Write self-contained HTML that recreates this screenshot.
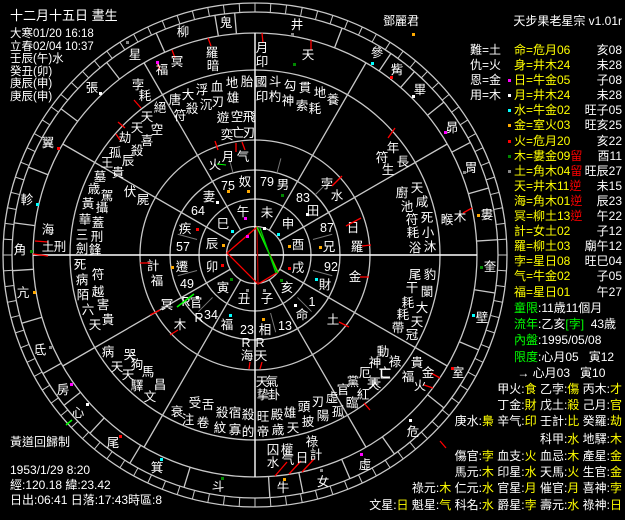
<!DOCTYPE html>
<html><head><meta charset="utf-8"><style>
html,body{margin:0;padding:0;background:#000;}
body{width:625px;height:520px;position:relative;overflow:hidden;font-family:"Liberation Sans","Noto Sans CJK TC","WenQuanYi Zen Hei",sans-serif;font-size:12px;color:#fff;}
.a{position:absolute;white-space:pre;line-height:13px;}
.y{color:#ff0;}.g{color:#0f0;}.r{color:#f00;}
.row{position:absolute;right:3px;white-space:pre;line-height:13px;text-align:right;}
.mk{position:absolute;width:3px;height:3px;}
svg{position:absolute;left:0;top:0;}
svg text{font-family:"Liberation Sans","Noto Sans CJK TC","WenQuanYi Zen Hei",sans-serif;font-size:12.5px;text-anchor:middle;dominant-baseline:central;fill:#fff;}
.tl div{height:12.5px;line-height:12.5px;font-size:11.5px;overflow:visible;}
</style></head><body>
<svg width="625" height="520" viewBox="0 0 625 520">
<g fill="none" stroke="#c8c8c8" stroke-width="1.3">
<circle cx="255" cy="255" r="28.5"/><circle cx="255" cy="255" r="56"/><circle cx="255" cy="255" r="85"/><circle cx="255" cy="255" r="115"/><circle cx="255" cy="255" r="185"/><circle cx="255" cy="255" r="222"/><circle cx="255" cy="255" r="243"/><circle cx="255" cy="255" r="252"/>
</g>
<g id="pal" stroke="#c8c8c8" stroke-width="1.3"></g>
<g id="man" stroke="#c8c8c8" stroke-width="1.3"></g>
<g id="tk" stroke="#c8c8c8" stroke-width="1"></g>
<line x1="255" y1="33" x2="255" y2="477" stroke="#fff" stroke-width="1.4"/>
<line x1="33" y1="255" x2="477" y2="255" stroke="#fff" stroke-width="1.4"/>
<g stroke-width="1.3" fill="none">
<polygon points="257,227 227,253 258,284 278,272" stroke="#f00"/>
<line x1="257" y1="227" x2="258" y2="284" stroke="#a00"/>
<line x1="257" y1="227" x2="278" y2="273" stroke="#0f0"/>
<line x1="260" y1="228" x2="276" y2="273" stroke="#0c0"/>
</g>
<text x="298" y="245">酉</text><text x="288" y="224">申</text><text x="267" y="213">未</text><text x="243" y="212">午</text><text x="223" y="224">巳</text><text x="212" y="244">辰</text><text x="212" y="267">卯</text><text x="223" y="288">寅</text><text x="244" y="299">丑</text><text x="267" y="299">子</text><text x="287" y="288">亥</text><text x="298" y="268">戌</text>
<text x="283" y="185">男</text><text x="245" y="182">奴</text><text x="209" y="197">妻</text><text x="185" y="229">疾</text><text x="182" y="267">遷</text><text x="196" y="303">官</text><text x="227" y="325">福</text><text x="265" y="330">相</text><text x="302" y="315">命</text><text x="325" y="285">財</text><text x="329" y="247">兄</text><text x="313" y="211">田</text>
<g style="fill:#888">
<text x="267" y="182">79</text><text x="303" y="198">83</text><text x="327" y="228">87</text><text x="331" y="267">92</text><text x="312" y="302">1</text><text x="285" y="326">13</text><text x="247" y="330">23</text><text x="211" y="315">34</text><text x="187" y="284">49</text><text x="183" y="247">57</text><text x="198" y="211">64</text><text x="228" y="186">75</text>
</g>
<g style="fill:#0f0">
<text x="215" y="165">火</text><text x="228" y="157">月</text><text x="243" y="157">气</text><text x="327" y="184">孛</text><text x="337" y="196">水</text><text x="353" y="228">日</text><text x="357" y="247">羅</text><text x="355" y="277">金</text><text x="333" y="320">土</text><text x="153" y="266">計</text><text x="157" y="281">福</text><text x="167" y="305">冥</text><text x="180" y="325">木</text><text x="247" y="356">海</text><text x="261" y="356">天</text>
</g>
<g style="fill:#f00;font-size:11px"><text x="186" y="302">R</text><text x="199" y="318">R</text><text x="246" y="343">R</text><text x="260" y="343">R</text></g>
<g stroke="#f00" stroke-width="1.3">
<line x1="346" y1="226" x2="361" y2="218"/><line x1="362" y1="246" x2="371" y2="245"/><line x1="360" y1="277" x2="369" y2="277"/><line x1="339" y1="322" x2="349" y2="327"/><line x1="332" y1="186" x2="342" y2="176"/><line x1="140" y1="263" x2="150" y2="263"/><line x1="160" y1="310" x2="150" y2="315"/><line x1="178" y1="330" x2="170" y2="335"/><line x1="250" y1="362" x2="249" y2="369"/><line x1="262" y1="362" x2="260" y2="369"/><line x1="218" y1="150" x2="215" y2="141"/><line x1="236" y1="152" x2="236" y2="143"/><line x1="245" y1="150" x2="242" y2="142"/>
<line x1="118" y1="122" x2="125" y2="128"/><line x1="134" y1="100" x2="141" y2="108"/><line x1="157" y1="63" x2="160" y2="70"/><line x1="172" y1="50" x2="175" y2="58"/><line x1="208" y1="38" x2="211" y2="46"/><line x1="262" y1="33" x2="263" y2="43"/><line x1="311" y1="40" x2="311" y2="50"/><line x1="388" y1="138" x2="395" y2="128"/><line x1="35" y1="241" x2="48" y2="242"/><line x1="33" y1="254" x2="48" y2="256"/><line x1="364" y1="403" x2="370" y2="410"/><line x1="440" y1="378" x2="431" y2="373"/><line x1="433" y1="388" x2="424" y2="385"/><line x1="463" y1="213" x2="472" y2="208"/><line x1="275" y1="476" x2="287" y2="462"/><line x1="289" y1="474" x2="301" y2="461"/><line x1="302" y1="472" x2="314" y2="459"/><line x1="116" y1="134" x2="120" y2="140"/><line x1="440" y1="441" x2="446" y2="448"/>
</g>
<line x1="217" y1="164" x2="226" y2="165" stroke="#0f0"/>
<line x1="177" y1="307" x2="194" y2="294" stroke="#0f0" stroke-width="1.5"/>
<line x1="66" y1="425" x2="72" y2="420" stroke="#0f0" stroke-width="1.5"/>
<text x="297" y="25">井</text><text x="226" y="23">鬼</text><text x="183" y="32">柳</text><text x="135" y="55">星</text><text x="92" y="88">張</text><text x="48" y="143">翼</text><text x="27" y="200">軫</text><text x="20" y="250">角</text><text x="23" y="293">亢</text><text x="40" y="350">氐</text><text x="63" y="390">房</text><text x="78" y="413">心</text><text x="113" y="443">尾</text><text x="157" y="468">箕</text><text x="218" y="487">斗</text><text x="283" y="488">牛</text><text x="323" y="482">女</text><text x="365" y="465">虛</text><text x="413" y="432">危</text><text x="458" y="373">室</text><text x="482" y="318">壁</text><text x="490" y="267">奎</text><text x="487" y="215">婁</text><text x="471" y="168">胃</text><text x="452" y="128">昴</text><text x="420" y="90">畢</text><text x="397" y="70">觜</text><text x="377" y="53">參</text>
<g style="fill:#ff0">
<text x="138" y="85">孛</text><text x="162" y="70">福</text><text x="177" y="62">冥</text><text x="212" y="53">羅</text><text x="262" y="48">月</text><text x="308" y="55">天</text><text x="48" y="230">海</text><text x="48" y="247">土</text><text x="460" y="217">木</text><text x="428" y="373">金</text><text x="420" y="386">火</text><text x="273" y="463">水</text><text x="288" y="460">气</text><text x="302" y="458">日</text><text x="316" y="455">計</text>
</g>
<g>
<text x="213" y="66">暗</text><text x="262" y="62">印</text><text x="145" y="96">耗</text><text x="60" y="247">刑</text><text x="447" y="220">睺</text><text x="273" y="450">囚</text><text x="287" y="450">權</text><text x="312" y="442">祿</text>
<text x="247" y="82">胎</text><text x="232" y="83">地</text><text x="217" y="87">血</text><text x="202" y="90">浮</text><text x="188" y="95">大</text><text x="175" y="100">唐</text><text x="233" y="98">雄</text><text x="218" y="102">刃</text><text x="206" y="105">沉</text><text x="192" y="109">殺</text><text x="180" y="116">符</text><text x="160" y="108">絕</text><text x="147" y="117">天</text><text x="137" y="128">天</text><text x="157" y="130">空</text><text x="147" y="141">喜</text><text x="125" y="138">劫</text><text x="137" y="151">殺</text><text x="115" y="153">孤</text><text x="128" y="161">辰</text><text x="107" y="163">王</text><text x="118" y="173">貴</text>
<text x="223" y="118">遊</text><text x="237" y="117">空</text><text x="249" y="117">飛</text><text x="227" y="135">奕</text><text x="238" y="133">亡</text><text x="249" y="133">刃</text>
<text x="261" y="82">國</text><text x="275" y="82">斗</text><text x="290" y="86">勾</text><text x="305" y="88">貫</text><text x="320" y="93">地</text><text x="333" y="100">養</text><text x="262" y="97">印</text><text x="275" y="97">杓</text><text x="288" y="101">神</text><text x="302" y="106">索</text><text x="315" y="109">耗</text>
<text x="393" y="148">年</text><text x="382" y="158">符</text><text x="403" y="162">長</text><text x="388" y="170">生</text><text x="417" y="188">天</text><text x="402" y="193">廚</text><text x="422" y="202">咸</text><text x="407" y="207">池</text><text x="427" y="218">死</text><text x="412" y="220">符</text><text x="428" y="233">小</text><text x="413" y="233">耗</text><text x="430" y="247">沐</text><text x="415" y="248">浴</text>
<text x="415" y="275">尾</text><text x="430" y="275">豹</text><text x="412" y="288">干</text><text x="427" y="292">闌</text><text x="408" y="303">耗</text><text x="422" y="308">大</text><text x="403" y="315">耗</text><text x="417" y="322">天</text><text x="398" y="328">帶</text><text x="412" y="335">冠</text>
<text x="383" y="352">動</text><text x="395" y="362">祿</text><text x="375" y="363">神</text><text x="385" y="373">亡</text><text x="365" y="373">厄</text><text x="417" y="363">貴</text><text x="408" y="377">福</text><text x="373" y="385">天</text><text x="353" y="382">黨</text><text x="363" y="395">紅</text><text x="343" y="390">官</text><text x="352" y="403">臨</text><text x="332" y="398">虛</text><text x="338" y="412">孤</text><text x="323" y="416">陽</text><text x="318" y="402">刃</text><text x="304" y="407">頭</text><text x="308" y="422">披</text><text x="290" y="413">雄</text><text x="293" y="428">天</text><text x="277" y="415">殿</text><text x="278" y="430">歳</text><text x="263" y="417">旺</text><text x="263" y="432">帝</text><text x="248" y="415">殺</text><text x="248" y="432">的</text><text x="235" y="413">宿</text><text x="235" y="430">寡</text><text x="222" y="413">殺</text><text x="220" y="428">紋</text><text x="208" y="405">舌</text><text x="203" y="423">卷</text><text x="195" y="403">受</text><text x="188" y="420">注</text><text x="177" y="412">衰</text><text x="262" y="382">天</text><text x="272" y="382">氣</text><text x="263" y="395">挚</text><text x="274" y="395">卦</text><text x="375" y="383">天</text><text x="385" y="374">匸</text>
<text x="128" y="375">天</text><text x="148" y="372">馬</text><text x="137" y="386">驛</text><text x="160" y="385">昌</text><text x="150" y="397">文</text><text x="108" y="352">病</text><text x="130" y="355">哭</text><text x="117" y="367">天</text><text x="137" y="365">狗</text>
<text x="100" y="177">墓</text><text x="94" y="189">歳</text><text x="107" y="196">駕</text><text x="88" y="204">黃</text><text x="102" y="208">攝</text><text x="85" y="220">華</text><text x="98" y="223">蓋</text><text x="82" y="235">三</text><text x="97" y="237">刑</text><text x="82" y="249">劍</text><text x="95" y="250">鋒</text><text x="130" y="192">伏</text><text x="143" y="200">屍</text>
<text x="80" y="265">死</text><text x="82" y="280">病</text><text x="98" y="275">符</text><text x="83" y="295">陌</text><text x="98" y="292">越</text><text x="88" y="310">六</text><text x="103" y="305">害</text><text x="95" y="325">天</text><text x="108" y="320">貴</text>
</g>
<g>
<rect x="156" y="61" width="3" height="3" fill="#f0f"/><rect x="412" y="33" width="3" height="3" fill="#fa0"/><rect x="291" y="33" width="3" height="3" fill="#888"/><rect x="126" y="41" width="3" height="3" fill="#888"/><rect x="99" y="92" width="3" height="3" fill="#fff"/><rect x="57" y="147" width="3" height="3" fill="#f00"/><rect x="36" y="203" width="3" height="3" fill="#0ff"/><rect x="30" y="250" width="3" height="3" fill="#080"/><rect x="33" y="291" width="3" height="3" fill="#fa0"/><rect x="49" y="346" width="3" height="3" fill="#888"/><rect x="70" y="383" width="3" height="3" fill="#f0f"/><rect x="86" y="403" width="3" height="3" fill="#fff"/><rect x="119" y="435" width="3" height="3" fill="#f00"/><rect x="160" y="458" width="3" height="3" fill="#0ff"/><rect x="221" y="477" width="3" height="3" fill="#080"/><rect x="283" y="478" width="3" height="3" fill="#fa0"/><rect x="320" y="469" width="3" height="3" fill="#888"/><rect x="360" y="453" width="3" height="3" fill="#f0f"/><rect x="409" y="419" width="3" height="3" fill="#fff"/><rect x="451" y="367" width="3" height="3" fill="#f00"/><rect x="472" y="314" width="3" height="3" fill="#0ff"/><rect x="480" y="266" width="3" height="3" fill="#080"/><rect x="477" y="214" width="3" height="3" fill="#fa0"/><rect x="463" y="171" width="3" height="3" fill="#888"/><rect x="444" y="131" width="3" height="3" fill="#f0f"/><rect x="412" y="95" width="3" height="3" fill="#fff"/><rect x="390" y="76" width="3" height="3" fill="#f00"/><rect x="371" y="62" width="3" height="3" fill="#0ff"/><rect x="293" y="63" width="3" height="3" fill="#080"/>
<rect x="246" y="235" width="3" height="3" fill="#f0f"/><rect x="227" y="190" width="3" height="3" fill="#fa0"/><rect x="231" y="230" width="3" height="3" fill="#0ff"/><rect x="222" y="244" width="3" height="3" fill="#fa0"/><rect x="221" y="264" width="3" height="3" fill="#f00"/><rect x="277" y="233" width="3" height="3" fill="#0ff"/><rect x="288" y="245" width="3" height="3" fill="#fa0"/><rect x="288" y="267" width="3" height="3" fill="#f00"/><rect x="280" y="279" width="3" height="3" fill="#080"/><rect x="263" y="289" width="3" height="3" fill="#888"/><rect x="246" y="289" width="3" height="3" fill="#888"/><rect x="230" y="278" width="3" height="3" fill="#080"/><rect x="263" y="227" width="3" height="3" fill="#fff"/><rect x="244" y="217" width="3" height="3" fill="#f0f"/><rect x="262" y="318" width="3" height="3" fill="#fa0"/><rect x="229" y="314" width="3" height="3" fill="#0ff"/><rect x="294" y="304" width="3" height="3" fill="#fff"/><rect x="315" y="278" width="3" height="3" fill="#0ff"/><rect x="319" y="246" width="3" height="3" fill="#fa0"/><rect x="306" y="213" width="3" height="3" fill="#fff"/><rect x="281" y="194" width="3" height="3" fill="#080"/><rect x="196" y="296" width="3" height="3" fill="#fff"/><rect x="171" y="266" width="3" height="3" fill="#fa0"/><rect x="196" y="228" width="3" height="3" fill="#f00"/><rect x="216" y="201" width="3" height="3" fill="#fff"/><rect x="247" y="190" width="3" height="3" fill="#fa0"/>
</g>
</svg>
<script>
(function(){var cx=255,cy=255,ns="http://www.w3.org/2000/svg";
function ln(g,a,r1,r2,col){var t=a*Math.PI/180,l=document.createElementNS(ns,"line");l.setAttribute("x1",cx+r1*Math.cos(t));l.setAttribute("y1",cy-r1*Math.sin(t));l.setAttribute("x2",cx+r2*Math.cos(t));l.setAttribute("y2",cy-r2*Math.sin(t));if(col)l.setAttribute("stroke",col);document.getElementById(g).appendChild(l);}
for(var a=30;a<360;a+=30){if(a%90)ln("pal",a,28.5,222);}
var m=[94.8,99.5,114,127.6,143,158.8,172.4,183.7,196.3,209.2,218.2,227.2,239,253,273.5,281.4,293,305,321,337,351,3.6,16,27.6,39,49,56,69];
m.forEach(function(a){ln("man",a,222,243);});
for(var a=0;a<360;a+=3.6){ln("tk",a,243,252);}
var g=[[105,85,100],[75,85,100],[45,85,100],[165,60,80],[195,60,80],[225,60,80],[285,60,80],[315,60,80],[345,60,80],[15,60,80]];
g.forEach(function(x){ln("tk",x[0],x[1],x[2],"#777");});
})();
</script>
<div class="a" style="left:10px;top:9px;font-size:13px;line-height:14px">十二月十五日 晝生</div>
<div class="a tl" style="left:10px;top:28px;line-height:12.5px"><div>大寒01/20 16:18</div><div>立春02/04 10:37</div><div>壬辰(午)水</div><div>癸丑(卯)</div><div>庚辰(申)</div><div>庚辰(申)</div></div>
<div class="a" style="left:383px;top:15px">鄧麗君</div>
<div class="a" style="right:3px;top:15px">天步果老星宗 v1.01r</div>
<div class="a" style="left:470px;top:43px;line-height:15.1px">難=土
仇=火
恩=金
用=木</div>
<div class="a y" style="left:514px;top:43px;line-height:15.1px">命=危月06
身=井木24
日=牛金05
月=井木24
水=牛金02
金=室火03
火=危月20
木=婁金09<span class="r">留</span>
土=角木04<span class="r">留</span>
天=井木11<span class="r">逆</span>
海=角木01<span class="r">逆</span>
冥=柳土13<span class="r">逆</span>
計=女土02
羅=柳土03
孛=星日08
气=牛金02
福=星日01</div>
<div class="a" style="right:3px;top:43px;line-height:15.1px;text-align:right">亥08
未28
子08
未28
旺子05
旺亥25
亥22
酉11
旺辰27
未15
辰23
午22
子12
廟午12
旺巳04
子05
午27</div>
<div class="mk" style="left:508px;top:79px;background:#f0f"></div>
<div class="mk" style="left:508px;top:94px;background:#fff"></div>
<div class="mk" style="left:508px;top:109px;background:#0ff"></div>
<div class="mk" style="left:508px;top:124px;background:#fa0"></div>
<div class="mk" style="left:508px;top:140px;background:#f00"></div>
<div class="mk" style="left:508px;top:155px;background:#080"></div>
<div class="mk" style="left:508px;top:170px;background:#888"></div>
<div class="a" style="left:514px;top:300px;line-height:16.2px"><span class="g">童限</span>:11歳11個月
<span class="g">流年</span>:乙亥<span class="g">[孛]</span>  43歳
<span class="g">內盤</span>:1995/05/08
<span class="g">限度</span>:心月05   寅12
 → 心月03   寅10</div>
<div class="row" style="top:383px">甲火:<span class="y">食</span> 乙孛:<span class="y">傷</span> 丙木:<span class="y">才</span></div>
<div class="row" style="top:399px">丁金:<span class="y">財</span> 戊土:<span class="y">殺</span> 己月:<span class="y">官</span></div>
<div class="row" style="top:415px">庚水:<span class="y">梟</span> 辛气:<span class="y">印</span> 壬計:<span class="y">比</span> 癸羅:<span class="y">劫</span></div>
<div class="row" style="top:433px">科甲:<span class="y">水</span> 地驛:<span class="y">木</span></div>
<div class="row" style="top:450px">傷官:<span class="y">孛</span> 血支:<span class="y">火</span> 血忌:<span class="y">木</span> 產星:<span class="y">金</span></div>
<div class="row" style="top:466px">馬元:<span class="y">木</span> 印星:<span class="y">水</span> 天馬:<span class="y">火</span> 生官:<span class="y">金</span></div>
<div class="row" style="top:482px">祿元:<span class="y">木</span> 仁元:<span class="y">水</span> 官星:<span class="y">月</span> 催官:<span class="y">月</span> 喜神:<span class="y">孛</span></div>
<div class="row" style="top:499px">文星:<span class="y">日</span> 魁星:<span class="y">气</span> 科名:<span class="y">水</span> 爵星:<span class="y">孛</span> 壽元:<span class="y">水</span> 祿神:<span class="y">日</span></div>
<div class="a" style="left:10px;top:436px">黃道回歸制</div>
<div class="a" style="left:10px;top:464px">1953/1/29 8:20</div>
<div class="a" style="left:10px;top:479px">經:120.18 緯:23.42</div>
<div class="a" style="left:10px;top:494px">日出:06:41 日落:17:43時區:8</div>
</body></html>
